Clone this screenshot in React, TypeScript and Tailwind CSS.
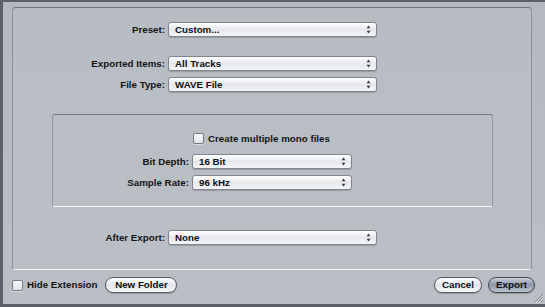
import type { ReactNode } from 'react';

const font = { fontFamily: '"Liberation Sans", Arial, sans-serif' };

function Arrows() {
  return (
    <svg width="5" height="9" viewBox="0 0 5 9" className="shrink-0">
      <path d="M2.5 0.5L4.5 3.2H0.5z" fill="#3a3d42" />
      <path d="M2.5 8.5L4.5 5.8H0.5z" fill="#3a3d42" />
    </svg>
  );
}

function Popup({ value, className }: { value: string; className: string }) {
  return (
    <div
      className={`h-[15px] flex items-center justify-between pl-[6px] pr-[5px] rounded-[3px] border border-[#80848b] bg-gradient-to-b from-[#ffffff] via-[#e6e8eb] to-[#f4f5f7] shadow-[0_1px_1px_rgba(0,0,0,0.18)] text-[#111] ${className}`}
    >
      <span className="leading-none">{value}</span>
      <Arrows />
    </div>
  );
}

function CheckBox() {
  return (
    <div className="w-[11px] h-[11px] shrink-0 rounded-[2px] border border-[#767a81] bg-gradient-to-b from-[#fbfbfc] to-[#dfe1e5] shadow-[0_1px_0_rgba(255,255,255,0.4)]" />
  );
}

function Row({ label, children, labelW }: { label: string; children: ReactNode; labelW: string }) {
  return (
    <div className="flex items-center h-[15px]">
      <div className={`${labelW} text-right pr-[3px] text-[#141414] leading-none`}>{label}</div>
      {children}
    </div>
  );
}

function PillButton({ children, className, primary }: { children: ReactNode; className: string; primary?: boolean }) {
  return (
    <button
      className={`h-[16px] rounded-full border flex items-center justify-center leading-none text-[#111] shadow-[0_1px_1px_rgba(0,0,0,0.2)] ${
        primary
          ? 'border-[#454a52] bg-gradient-to-b from-[#c7ced9] via-[#8d97a8] to-[#bcc4d0]'
          : 'border-[#585b62] bg-gradient-to-b from-[#ffffff] via-[#e4e6e9] to-[#f6f7f8]'
      } ${className}`}
    >
      {children}
    </button>
  );
}

export default function App() {
  return (
    <div
      className="w-[545px] h-[307px] bg-[#5d6066] pl-[3px] pt-[2px] pb-[3px] flex font-bold text-[9.75px]"
      style={font}
    >
      <div className="relative flex-1 flex flex-col bg-gradient-to-b from-[#b4b8bf] to-[#babec5]">
        {/* Main group box */}
        <div className="ml-[9px] mt-[5px] w-[520px] h-[263px] rounded-[4px] border border-[#8e9299] border-t-[#6f737a] border-b-[#f4f5f7] bg-[#bbbfc6]/60 flex flex-col pt-[14px]">
          <Row label="Preset:" labelW="w-[155px]">
            <Popup value="Custom..." className="w-[209px]" />
          </Row>
          <div className="mt-[19px]">
            <Row label="Exported Items:" labelW="w-[155px]">
              <Popup value="All Tracks" className="w-[209px]" />
            </Row>
          </div>
          <div className="mt-[6px]">
            <Row label="File Type:" labelW="w-[155px]">
              <Popup value="WAVE File" className="w-[209px]" />
            </Row>
          </div>

          {/* Format options box */}
          <div className="ml-[39px] mt-[22px] w-[441px] h-[93px] rounded-[3px] border border-[#92969d] border-t-[#73777e] border-b-[#f6f7f8] flex flex-col pt-[18px]">
            <div className="flex items-center h-[11px] pl-[140px]">
              <CheckBox />
              <span className="ml-[4px] leading-none text-[#141414]">Create multiple mono files</span>
            </div>
            <div className="mt-[10px]">
              <Row label="Bit Depth:" labelW="w-[139px]">
                <Popup value="16 Bit" className="w-[160px]" />
              </Row>
            </div>
            <div className="mt-[6px]">
              <Row label="Sample Rate:" labelW="w-[139px]">
                <Popup value="96 kHz" className="w-[160px]" />
              </Row>
            </div>
          </div>

          <div className="mt-[23px]">
            <Row label="After Export:" labelW="w-[155px]">
              <Popup value="None" className="w-[209px]" />
            </Row>
          </div>
        </div>

        {/* Bottom bar */}
        <div className="mt-[7px] flex items-center pl-[9px] pr-[10px]">
          <CheckBox />
          <span className="ml-[4px] leading-none text-[#141414]">Hide Extension</span>
          <PillButton className="ml-[8px] w-[72px]">New Folder</PillButton>
          <div className="flex-1" />
          <PillButton className="w-[48px]">Cancel</PillButton>
          <PillButton primary className="ml-[6px] w-[47px]">Export</PillButton>
        </div>

        {/* resize grip */}
        <svg width="10" height="10" viewBox="0 0 10 10" className="absolute right-[1px] bottom-[1px]">
          <path d="M9 1L1 9M9 4L4 9M9 7L7 9" stroke="#7a7e85" strokeWidth="1" />
          <path d="M9.8 1.8L1.8 9.8M9.8 4.8L4.8 9.8" stroke="#e6e8eb" strokeWidth="0.8" />
        </svg>
      </div>
    </div>
  );
}
